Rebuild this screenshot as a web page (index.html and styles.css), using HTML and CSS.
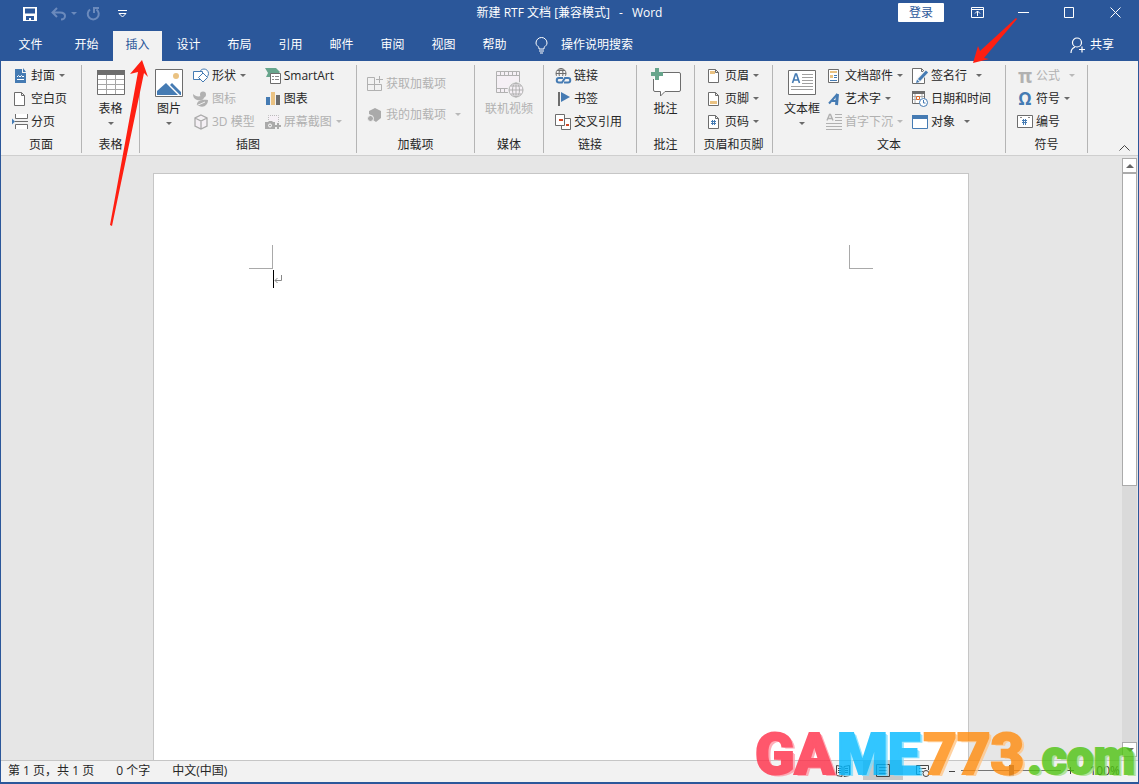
FILE: index.html
```html
<!DOCTYPE html>
<html lang="zh-CN">
<head>
<meta charset="utf-8">
<title>新建 RTF 文档 [兼容模式] - Word</title>
<link rel="stylesheet" href="styles.css">
</head>
<body>
<div class="window">
  <header class="titlebar">
    <div class="quick">
      <button class="qbtn save" aria-label="保存"><svg width="14" height="14" viewBox="0 0 14 14"><path d="M0 0h14v14H0z" fill="#fff"/><path d="M2 1.500h10v5H2zM3 9h8v4H8v-2H6v2H3z" fill="#2b579a"/></svg></button>
      <button class="qbtn undo dim" aria-label="撤消"><svg width="16" height="14" viewBox="0 0 16 14" fill="none" stroke="currentColor" stroke-width="2"><path d="M6 1L1.500 5.500 6 10M2 5.500h7c7 0 6 7 1 7"/></svg></button>
      <i class="caret dim"></i>
      <button class="qbtn redo dim" aria-label="重复"><svg width="15" height="14" viewBox="0 0 15 14" fill="none" stroke="currentColor" stroke-width="2"><path d="M4 2.500A5.500 5.500 0 1 0 10.500 2.500M8 6V1h5"/></svg></button>
      <button class="qbtn custom" aria-label="自定义快速访问工具栏"><svg width="9" height="8" viewBox="0 0 9 8" fill="none" stroke="#fff"><path d="M0 .5h9M1 3.500h7L4.500 7z"/></svg></button>
    </div>
    <h1 class="title"><span>新建 RTF 文档 [兼容模式]</span><span>-</span><span>Word</span></h1>
    <div class="controls">
      <button class="login">登录</button>
      <button class="wbtn" aria-label="功能区显示选项"><svg width="13" height="11" viewBox="0 0 13 11" fill="none" stroke="#fff"><path d="M.5.5h12v10H.5zM.5 2.500h12M6.500 9V4M4 6.500L6.500 4 9 6.500"/></svg></button>
      <button class="wbtn" aria-label="最小化"><svg width="11" height="11" viewBox="0 0 11 11"><path d="M0 5h11v1H0z" fill="#fff"/></svg></button>
      <button class="wbtn" aria-label="最大化"><svg width="11" height="11" viewBox="0 0 11 11" fill="none" stroke="#fff"><path d="M.5.5h9v10h-9z"/></svg></button>
      <button class="wbtn" aria-label="关闭"><svg width="11" height="11" viewBox="0 0 11 11" fill="none" stroke="#fff"><path d="M.5.5l10 10M10.500.5l-10 10"/></svg></button>
    </div>
  </header>

  <nav class="tabs">
    <button class="tab file">文件</button>
    <button class="tab">开始</button>
    <button class="tab active">插入</button>
    <button class="tab">设计</button>
    <button class="tab">布局</button>
    <button class="tab">引用</button>
    <button class="tab">邮件</button>
    <button class="tab">审阅</button>
    <button class="tab">视图</button>
    <button class="tab">帮助</button>
    <button class="tell"><svg width="13" height="17" viewBox="0 0 13 17" fill="none" stroke="#fff"><path d="M4 12V10.500C2.500 9 1 8 1 6a5.300 5.300 0 0 1 11 0c0 2-1.500 3-3 4.500V12zM4 14h5M5 16h3"/></svg>操作说明搜索</button>
    <button class="share"><svg width="16" height="17" viewBox="0 0 16 17" fill="none" stroke="#fff" stroke-width="1.200"><circle cx="7" cy="5.500" r="4.500"/><path d="M1 16c0-3 1.500-5 4-6M12 9.500v6M9 12.500h6"/></svg>共享</button>
  </nav>

  <main class="ribbon">
    <section class="group pages">
      <div class="body">
        <div class="col">
          <button class="item"><svg class="ic" viewBox="0 0 16 16"><path d="M3 1h7v4h4v10H3z" fill="#457bb3"/><path d="M11 0l3 4h-3z" fill="#457bb3"/><path d="M5 9l1.500-1.500L8 9l1.500-1.500L11 9l1-1M5 11.500h7" stroke="#fff" fill="none"/></svg>封面<i class="caret"></i></button>
          <button class="item"><svg class="ic" viewBox="0 0 16 16" fill="#fff" stroke="#6d6d6d"><path d="M2.500 1.500h7l3 3v10h-10zM9.500 1.500v3h3"/></svg>空白页</button>
          <button class="item"><svg class="ic" viewBox="0 0 16 16"><path d="M3.500 0v4.500h12V0M3.500 15v-4.500h12V15" fill="#fff" stroke="#6d6d6d"/><path d="M3 7.500h13" stroke="#6d6d6d"/><path d="M0 4.500v6L3 7.500z" fill="#457bb3"/></svg>分页</button>
        </div>
      </div>
      <h2>页面</h2>
    </section>

    <section class="group centered">
      <div class="body">
        <button class="big"><svg width="28" height="30" viewBox="0 0 28 30"><path d="M.5 2.500h27v24H.5z" fill="#fff" stroke="#6d6d6d"/><path d="M0 2h28v5H0z" fill="#6d6d6d"/><path d="M1 11.500h26M1 16.500h26M1 21.500h26M9.500 7v19M18.500 7v19" stroke="#a6a6a6" fill="none"/></svg><span>表格</span><i class="caret"></i></button>
      </div>
      <h2>表格</h2>
    </section>

    <section class="group illus">
      <div class="body">
        <button class="big"><svg width="28" height="30" viewBox="0 0 28 30"><path d="M.5 1.500h27v27H.5z" fill="#fff" stroke="#6d6d6d"/><circle cx="21" cy="8" r="3" fill="#eac282"/><path d="M2 27v-4l9-8 12 12zM15 17l2-2 9 9v3h-1z" fill="#457bb3"/></svg><span>图片</span><i class="caret"></i></button>
        <div class="col">
          <button class="item"><svg class="ic" viewBox="0 0 16 16" fill="#fff" stroke="#457bb3"><circle cx="11" cy="5.500" r="4.500"/><path d="M.5 3.500h9v8h-9z"/><path d="M10 5l4.500 4.500L10 14 5.500 9.500z"/></svg>形状<i class="caret"></i></button>
          <button class="item" disabled><svg class="ic" viewBox="0 0 16 16" fill="#b1b1b1"><circle cx="10" cy="3.500" r="3"/><path d="M0 3c3 3 6 3 12 1-1 5-4 6-8 5C1 8 0 6 0 3zM4 15c-1-5 4-7 11-6 0 5-4 8-9 6z"/><path d="M3 15l9-4" stroke="#f2f2f2"/></svg>图标</button>
          <button class="item" disabled><svg class="ic" viewBox="0 0 16 16" fill="#f5f0f5" stroke="#aaa" stroke-width="1.300"><path d="M8 1l6 3v8l-6 3-6-3V4zM2 4l6 3 6-3M8 7v8"/></svg>3D 模型</button>
        </div>
        <div class="col">
          <button class="item"><svg class="ic" viewBox="0 0 16 16"><path d="M0 0h11l4 4-2 2H5v3H1l2-4z" fill="#67a58c"/><path d="M5.500 5.500h10v10h-10z" fill="#fff" stroke="#6d6d6d"/><path d="M7 8.500h2m1 0h4M7 11.500h2m1 0h4" stroke="#888"/></svg>SmartArt</button>
          <button class="item"><svg class="ic" viewBox="0 0 16 16"><path d="M1 6h4v8H1z" fill="#457bb3"/><path d="M6 1h4v13H6z" fill="#eac282"/><path d="M11 4h4v10h-4z" fill="#6d6d6d"/></svg>图表</button>
          <button class="item" disabled><svg class="ic" viewBox="0 0 16 16"><path d="M3.500 6V1.500h10V9" fill="#f5f0f5" stroke="#bbb" stroke-dasharray="1 1"/><path d="M0 8h3l1-1h3l1 1h2v7H0zM12 9h2v2h2v2h-2v2h-2v-2h-2v-2h2z" fill="#aaa"/><circle cx="5" cy="11.500" r="1.500" fill="#aaa" stroke="#fff"/></svg>屏幕截图<i class="caret"></i></button>
        </div>
      </div>
      <h2>插图</h2>
    </section>

    <section class="group addins">
      <div class="body">
        <div class="col two">
          <button class="item" disabled><svg class="ic" viewBox="0 0 16 16" fill="none" stroke="#b1b1b1"><path d="M7.500 1.500h-7v13h14v-6M7.500 1.500v13M.5 8.500h14M12.500 0v7M9 3.500h7"/></svg>获取加载项</button>
          <button class="item" disabled><svg class="ic" viewBox="0 0 16 16" fill="#aaa"><path d="M8 1l6 3v7l-5 4-3-2V9L2 7V4z"/><circle cx="3.500" cy="11.500" r="3" stroke="#f2f2f2"/></svg>我的加载项<i class="caret far"></i></button>
        </div>
      </div>
      <h2>加载项</h2>
    </section>

    <section class="group centered">
      <div class="body">
        <button class="big" disabled><svg width="28" height="30" viewBox="0 0 28 30" fill="#f5f0f5" stroke="#b1b1b1"><path d="M1.500 3.500h23v21h-23z"/><path d="M1.500 7.500h23M1.500 20.500h23M5.500 3.500v4m4-4v4m4-4v4m4-4v4m4-4v4m-16 13v4m4-4v4"/><circle cx="21" cy="22" r="8.500" fill="#f2f2f2" stroke="none"/><circle cx="21" cy="22" r="7"/><path d="M21 15v14M14 22h14M16 18h10M16 26h10" fill="none"/><ellipse cx="21" cy="22" rx="3.500" ry="7" fill="none"/></svg><span>联机视频</span></button>
      </div>
      <h2>媒体</h2>
    </section>

    <section class="group links">
      <div class="body">
        <div class="col">
          <button class="item"><svg class="ic" viewBox="0 0 16 16" fill="none"><g stroke="#6d6d6d"><circle cx="6" cy="5.500" r="5"/><ellipse cx="6" cy="5.500" rx="2" ry="5"/><path d="M1 5.500h10M2 2.500h8"/></g><path d="M1 8h15v8H1z" fill="#f2f2f2"/><path d="M8 10H4a2.200 2.200 0 0 0 0 4.500h3l3-4.500h3a2.200 2.200 0 0 1 0 4.500H9" stroke="#457bb3" stroke-width="2"/></svg>链接</button>
          <button class="item"><svg class="ic" viewBox="0 0 16 16"><path d="M3 1h2v14H3z" fill="#6d6d6d"/><path d="M6 1l9 5-9 5z" fill="#457bb3"/></svg>书签</button>
          <button class="item"><svg class="ic" viewBox="0 0 16 16"><path d="M6.500 4.500h9v11h-9z" fill="#fff" stroke="#6d6d6d"/><path d="M.5.500h9v11h-9z" fill="#fff" stroke="#6d6d6d"/><path d="M4 5h4v2H4zM11 10h3v2h-3z" fill="#d24726"/></svg>交叉引用</button>
        </div>
      </div>
      <h2>链接</h2>
    </section>

    <section class="group centered">
      <div class="body">
        <button class="big"><svg width="30" height="30" viewBox="0 0 30 30"><path d="M4 4.500h24a1.500 1.500 0 0 1 1.500 1.500v16a1.500 1.500 0 0 1-1.500 1.500H14L9.500 28v-4.500H4A1.500 1.500 0 0 1 2.500 22V6z" fill="#fff" stroke="#6d6d6d"/><path d="M-1 3h10v6H3v2h-4z" fill="#f2f2f2"/><path d="M4 0h4v4h4v4H8v4H4V8H0V4h4z" fill="#67a58c"/></svg><span>批注</span></button>
      </div>
      <h2>批注</h2>
    </section>

    <section class="group headers">
      <div class="body">
        <div class="col">
          <button class="item"><svg class="ic" viewBox="0 0 16 16"><path d="M2.500 1.500h7l3 3v10h-10zM9.500 1.500v3h3" fill="#fff" stroke="#6d6d6d"/><path d="M4 3h5v3H4z" fill="#eac282"/></svg>页眉<i class="caret"></i></button>
          <button class="item"><svg class="ic" viewBox="0 0 16 16"><path d="M2.500 1.500h7l3 3v10h-10zM9.500 1.500v3h3" fill="#fff" stroke="#6d6d6d"/><path d="M4 10h7v3H4z" fill="#eac282"/></svg>页脚<i class="caret"></i></button>
          <button class="item"><svg class="ic" viewBox="0 0 16 16"><path d="M2.500 1.500h7l3 3v10h-10zM9.500 1.500v3h3" fill="#fff" stroke="#6d6d6d"/><path d="M6.500 6v5M8.500 6v5M5 7.500h5M5 9.500h5" stroke="#457bb3"/></svg>页码<i class="caret"></i></button>
        </div>
      </div>
      <h2>页眉和页脚</h2>
    </section>

    <section class="group textgroup">
      <div class="body">
        <button class="big"><svg width="28" height="30" viewBox="0 0 28 30"><path d="M.5 2.500h27v24H.5z" fill="#fff" stroke="#6d6d6d"/><path d="M4.500 15l3-9h1l3 9M6 12h5" fill="none" stroke="#457bb3" stroke-width="1.600"/><path d="M14 6.500h11M14 9.500h11M14 12.500h11M14 15.500h11M3 18.500h22M3 21.500h22" stroke="#a0a0a0"/></svg><span>文本框</span><i class="caret"></i></button>
        <div class="col c1">
          <button class="item"><svg class="ic" viewBox="0 0 16 16"><path d="M2.500 1.500h10v13h-10z" fill="#fff" stroke="#6d6d6d"/><path d="M4 3h7v2H4zM4 7h3v3H4z" fill="#eac282"/><path d="M8 7h3v1H8zM8 9h3v1H8zM4 12h7v1H4z" fill="#457bb3"/></svg>文档部件<i class="caret"></i></button>
          <button class="item"><svg class="ic" viewBox="0 0 16 16" fill="none" stroke="#457bb3"><path d="M3 12.500L11.500 3" stroke-width="2"/><path d="M11.500 3l-1 11" stroke-width="3"/><path d="M6 10h5" stroke-width="2"/></svg>艺术字<i class="caret"></i></button>
          <button class="item" disabled><svg class="ic" viewBox="0 0 16 16" fill="none" stroke="#b1b1b1"><path d="M1 6.500l2.500-6h1l2.500 6M2 4.500h4" stroke-width="1.400"/><path d="M9 .5h7M9 3.500h7M9 6.500h7M0 9.500h16M0 12.500h16M0 15.500h16"/></svg>首字下沉<i class="caret"></i></button>
        </div>
        <div class="col c2">
          <button class="item"><svg class="ic" viewBox="0 0 16 16"><path d="M.5.500h9l3 3v12H.5zM9.500.5v3h3" fill="#fff" stroke="#6d6d6d"/><path d="M6 13l9-10" stroke="#f2f2f2" stroke-width="5"/><path d="M7 12l8-8.500" stroke="#457bb3" stroke-width="3"/><path d="M4 15l1-3.500L7.500 14z" fill="#457bb3"/></svg>签名行<i class="caret far"></i></button>
          <button class="item"><svg class="ic" viewBox="0 0 16 16"><path d="M.5.5h12v12H.5z" fill="#fff" stroke="#6d6d6d"/><path d="M0 0h13v3H0z" fill="#6d6d6d"/><path d="M1 5.500h11M1 8.500h5M3 3v9M10 3v4" stroke="#aaa"/><path d="M4.500 5.500h3v3h-3z" fill="#fff" stroke="#e06a2b"/><circle cx="11.500" cy="11.500" r="4" fill="#fff" stroke="#457bb3"/><path d="M11.500 9v3h2" fill="none" stroke="#457bb3"/></svg>日期和时间</button>
          <button class="item"><svg class="ic" viewBox="0 0 16 16"><path d="M.5 1.500h15v13H.5z" fill="#fff" stroke="#457bb3"/><path d="M0 1h16v4H0z" fill="#457bb3"/></svg>对象<i class="caret far"></i></button>
        </div>
      </div>
      <h2>文本</h2>
    </section>

    <section class="group symbols">
      <div class="body">
        <div class="col">
          <button class="item" disabled><span class="ic glyph">π</span>公式<i class="caret far"></i></button>
          <button class="item"><span class="ic glyph omega">Ω</span>符号<i class="caret"></i></button>
          <button class="item"><svg class="ic" viewBox="0 0 16 16"><path d="M.5 1.500h15v12H.5z" fill="#fff" stroke="#6d6d6d"/><path d="M3 3.500h2M11 3.500h2" stroke="#888"/><path d="M6.500 5v6M8.500 5v6M5 6.500h5M5 8.500h5" stroke="#457bb3"/></svg>编号</button>
        </div>
      </div>
      <h2>符号</h2>
    </section>
    <button class="collapse" aria-label="折叠功能区"><svg width="11" height="6" viewBox="0 0 11 6" fill="none" stroke="#444"><path d="M.5 5.500l5-5 5 5"/></svg></button>
  </main>

  <div class="workspace">
    <div class="canvas">
      <article class="page">
        <div class="marks"><i class="mark left"></i><i class="mark right"></i></div>
        <p class="line"><svg width="8" height="9" viewBox="0 0 8 9" fill="none" stroke="#888"><path d="M7.500 0v5.500H1M3.500 3L1 5.500 3.500 8"/></svg></p>
      </article>
    </div>
    <div class="scroll">
      <button class="sbtn" aria-label="向上滚动"><i class="caret up"></i></button>
      <div class="track"><div class="thumb"></div></div>
      <button class="sbtn" aria-label="向下滚动"><i class="caret down"></i></button>
    </div>
  </div>

  <footer class="status">
    <span>第 1 页，共 1 页</span><span>0 个字</span><span>中文(中国)</span>
    <div class="views">
      <button class="view" aria-label="阅读视图"><svg width="14" height="12" viewBox="0 0 14 12" fill="none" stroke="#444"><path d="M.5.5L6 1.500v10L.5 10.500zM13.500.5L8 1.500v10l5.500-1zM2 3.500h3M2 5.500h3M2 7.500h3M9 3.500h3M9 5.500h3M9 7.500h3"/></svg></button>
      <button class="view on" aria-label="页面视图"><svg width="14" height="13" viewBox="0 0 14 13" fill="none" stroke="#444"><path d="M.5.5h13v12H.5zM3 3.500h8M3 6.500h8M3 9.500h8"/></svg></button>
      <button class="view" aria-label="Web 版式视图"><svg width="14" height="12" viewBox="0 0 14 12" fill="none" stroke="#444"><path d="M6 9.500H.5v-9h12V5M3 3.500h7M3 6.500h4"/><circle cx="10" cy="8.500" r="3"/></svg></button>
      <button class="zoombtn" aria-label="缩小"><svg width="6" height="6" viewBox="0 0 6 6" stroke="#444"><path d="M0 3.500h6"/></svg></button>
      <input class="zoom" type="range" min="10" max="190" value="100" aria-label="显示比例">
      <button class="zoombtn" aria-label="放大"><svg width="7" height="7" viewBox="0 0 7 7" stroke="#444"><path d="M0 3.500h7M3.500 0v7"/></svg></button>
      <button class="percent">100%</button>
    </div>
  </footer>

  <svg class="arrow first" width="40" height="170" viewBox="0 0 40 170"><path d="M35 0L23 14l8-2L3 165l2 1L37 13l4 4z" fill="#ff1f12"/></svg>
  <svg class="arrow second" width="48" height="46" viewBox="0 0 48 46"><path d="M45 0L9 33 7 28 2 45l16-4-5-1L46 1z" fill="#ff1f12"/></svg>
  <div class="brand"><span class="red">GA</span><span class="blue">ME</span><span class="orange">773</span><span class="green">.com</span></div>
</div>
</body>
</html>
```
FILE: styles.css
```css
* { box-sizing: border-box; }
body {
  margin: 0;
  font: 12px/16px "Open Sans", "Noto Sans CJK SC", sans-serif;
  color: #262626;
}
button { font: inherit; color: inherit; background: none; border: 0; padding: 0; margin: 0; white-space: nowrap; }
svg { display: block; flex: none; overflow: visible; }
h1, h2, p { margin: 0; font: inherit; }

.window {
  position: relative;
  display: flex;
  flex-direction: column;
  height: 100vh;
  overflow: hidden;
  border: solid #2b579a;
  border-width: 0 1px 2px;
  background: #e6e6e6;
}

.caret { width: 0; height: 0; border: 3px solid transparent; border-top-color: #6a6a6a; border-bottom: 0; flex: none; }
.caret.up { border-width: 0 4px 4px; border-bottom: 4px solid #666; }
.caret.down { border-width: 4px 4px 0; }

.titlebar {
  display: grid;
  grid-template-columns: 1fr auto 1fr;
  height: 31px;
  flex: none;
  background: #2b579a;
  color: #fff;
}
.quick { display: flex; align-items: center; height: 27px; padding-left: 22px; }
.undo { margin-left: 14px; }
.quick .caret { margin-left: 4px; border-top-color: currentColor; }
.redo { margin-left: 9px; }
.custom { margin-left: 17px; }
.dim { color: #6b8abc; }
.title { display: flex; gap: 9px; padding-top: 5px; white-space: nowrap; }
.controls { display: flex; justify-content: flex-end; height: 25px; align-items: center; }
.login { width: 46px; height: 19px; margin-right: 10px; background: #fff; color: #2b579a; border-radius: 1px; }
.wbtn { display: grid; place-items: center; width: 46px; height: 25px; }

.tabs { display: flex; gap: 2px; height: 30px; flex: none; background: #2b579a; color: #fff; }
.tab { width: 49px; padding-bottom: 2px; }
.tab.file { width: 59px; }
.tab.active { background: #f2f2f2; color: #2b579a; }
.tell, .share { display: flex; align-items: center; padding-bottom: 2px; }
.tell { gap: 13px; margin-left: 14px; }
.share { gap: 4px; margin-left: auto; padding-right: 24px; }

.ribbon {
  display: grid;
  grid-template-columns: 81px 58px 217px 118px 69px 93px 58px 78px 233px 82px 1fr;
  height: 95px;
  flex: none;
  padding: 3px 0 4px;
  background: #f2f2f2;
  border-bottom: 1px solid #cfcfcf;
}
.group { display: flex; flex-direction: column; border-right: 1px solid #b5b5b5; margin-top: 1px; }
.body { display: flex; height: 70px; align-items: flex-start; }
.group h2 { text-align: center; line-height: 17px; padding-top: 1px; white-space: nowrap; }
.centered .body { justify-content: center; }
.col { display: flex; flex-direction: column; align-items: flex-start; }
.item { display: flex; align-items: center; gap: 3px; height: 23px; padding-bottom: 2px; }
.ic { width: 16px; height: 16px; }
.item .caret { margin-left: 1px; }
.item .caret.far { margin-left: 6px; }
.item:disabled, .big:disabled { color: #b1b1b1; }
:disabled .caret { border-top-color: #b9b9b9; }
.two { gap: 8px; padding-top: 8px; }
.big { display: flex; flex-direction: column; align-items: center; padding-top: 3px; }
.big span { margin-top: 3px; }
.big .caret { margin-top: 5px; }

.pages .body, .links .body, .headers .body, .symbols .body, .textgroup .body { padding-left: 11px; }
.addins .body { padding-left: 10px; }
.illus .body { padding-left: 15px; }
.illus .col { margin-left: 10px; }
.c1 { margin-left: 6px; }
.c2 { margin-left: 9px; }
.glyph { font: 700 19px/16px "Noto Sans", sans-serif; text-align: center; }
.omega { color: #457bb3; font-size: 17px; }
.collapse { justify-self: end; align-self: end; padding: 0 8px 2px 0; }

.workspace { display: flex; flex: 1; min-height: 0; }
.canvas { flex: 1; display: flex; justify-content: center; padding: 17px 2px 0 0; }
.page { width: 816px; background: #fff; border: 1px solid #c6c6c6; border-bottom: 0; padding: 71px 95px 0; }
.marks { display: flex; justify-content: space-between; }
.mark { width: 24px; height: 24px; border: 0 solid #a9a9a9; border-bottom-width: 1px; }
.mark.left { border-right-width: 1px; }
.mark.right { border-left-width: 1px; }
.line { display: flex; align-items: center; height: 18px; margin: 1px 0 0 24px; border-left: 1px solid #000; }
.scroll { display: flex; flex-direction: column; width: 15px; margin: 2px 1px 3px 0; }
.sbtn { display: grid; place-items: center; height: 15px; background: #fff; border: 1px solid #ababab; }
.track { flex: 1; background: #dadada; }
.thumb { height: 55%; background: #fff; border: 1px solid #ababab; }

.status { display: flex; align-items: center; gap: 22px; height: 22px; flex: none; padding: 0 0 2px 7px; background: #f2f2f2; border-top: 1px solid #c6c6c6; }
.views { display: flex; align-items: center; align-self: stretch; margin-left: auto; padding-right: 18px; }
.view { display: grid; place-items: center; width: 40px; align-self: stretch; }
.view.on { background: #c8c8c8; }
.zoombtn { display: grid; place-items: center; width: 18px; height: 16px; }
.zoom { appearance: none; width: 100px; height: 16px; margin: 0; background: linear-gradient(#777, #777) center / 100% 1px no-repeat; }
.zoom::-webkit-slider-thumb { appearance: none; width: 5px; height: 11px; background: #666; }
.percent { margin-left: 10px; color: #333; }

.arrow { position: absolute; }
.first { left: 106px; top: 60px; }
.second { left: 970px; top: 18px; }
.brand {
  position: absolute;
  right: 3px;
  bottom: -5px;
  display: flex;
  gap: 3px;
  align-items: baseline;
  font: 900 58px/58px Roboto, sans-serif;
  opacity: 0.8;
}
.brand span { -webkit-text-stroke: 2px currentColor; text-shadow: 1px 1px var(--edge), 2px 1px var(--edge), 3px 2px var(--edge); }
.red { color: #ff2e48; --edge: #ff9ba8; }
.blue { color: #00b8ff; --edge: #7adeff; }
.orange { color: #ff8c0d; --edge: #ffc78a; }
.green { color: #50c412; --edge: #a6e085; font-size: 48px; }
```
